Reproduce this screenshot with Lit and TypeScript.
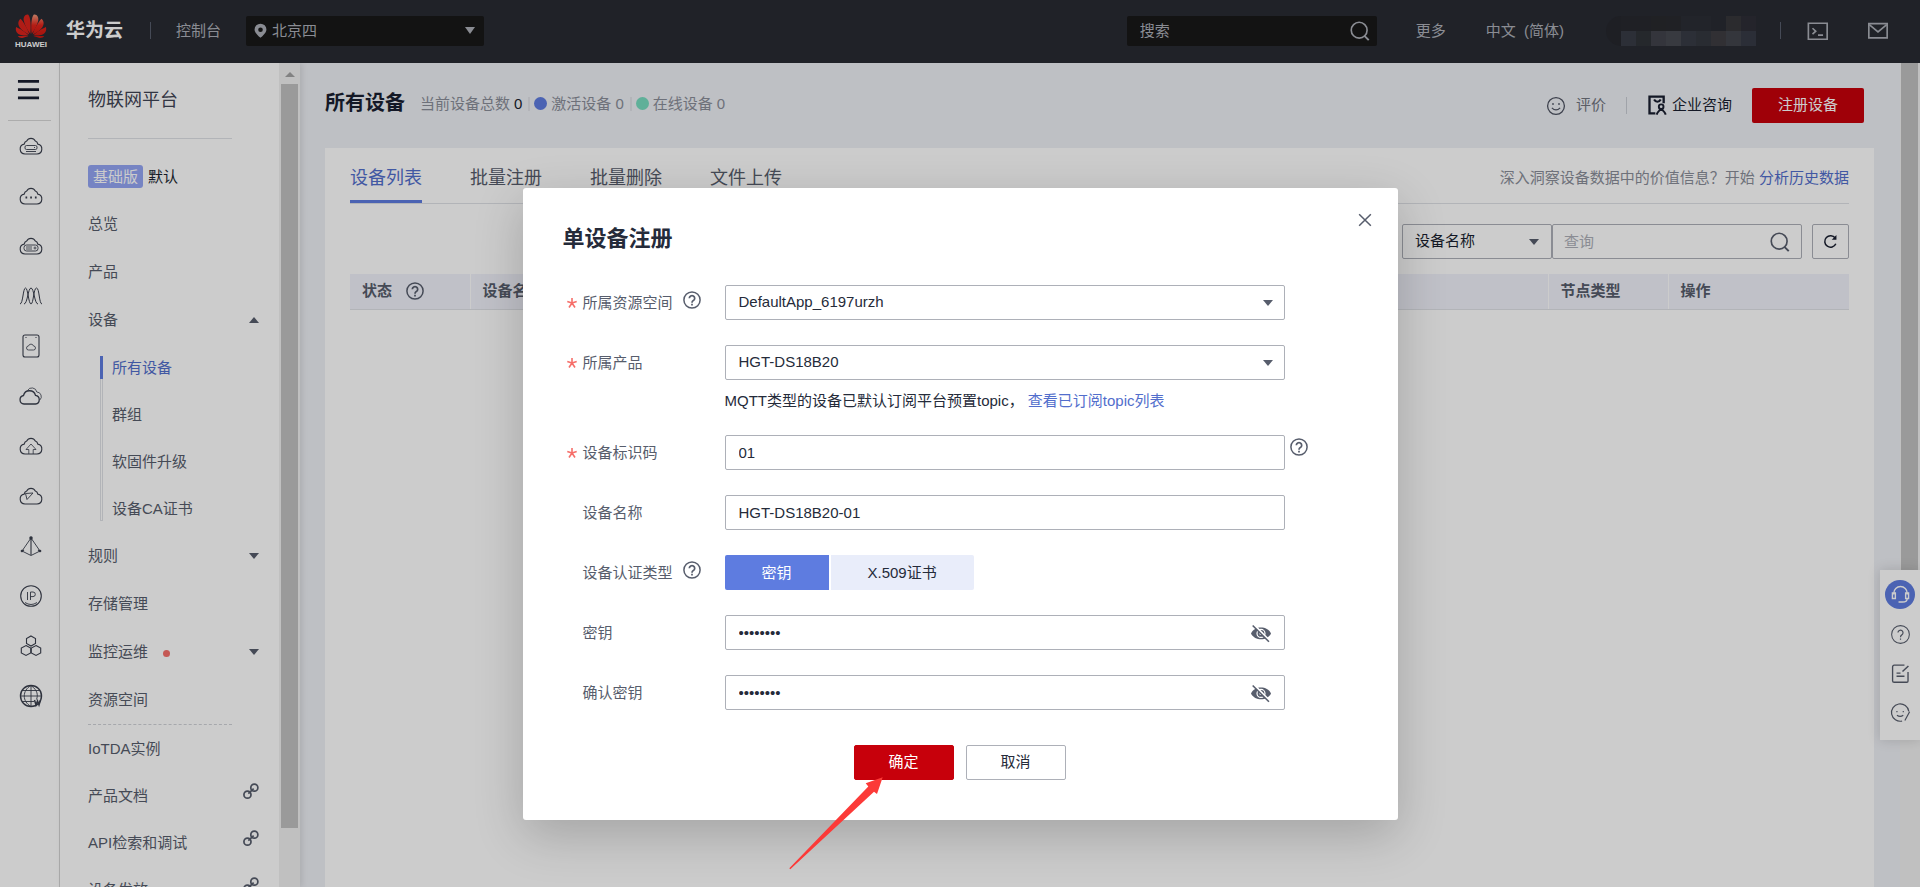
import { LitElement, html, css, svg, nothing, type TemplateResult } from "lit";
import { customElement, property } from "lit/decorators.js";
import { classMap } from "lit/directives/class-map.js";

const cloud = "M6 20a5 5 0 0 1-.8-9.900A3.800 3.800 0 0 1 7.700 7a4.800 4.800 0 0 1 8.600 0 3.800 3.800 0 0 1 2.500 3.100A5 5 0 0 1 18 20Z";

const glyphs: Record<string, TemplateResult> = {
  server: svg`<path d=${cloud}/><rect x="6" y="11.500" width="12" height="4" rx="1.500" stroke-width=".9"/><path d="M15 13.500h1M7 17.500h10" stroke-width=".9"/>`,
  dots: svg`<path d=${cloud}/><path d="M6.500 13.500h1.700M11.200 13.500h1.700M15.900 13.500h1.700" stroke-width="1.800"/>`,
  disk: svg`<path d=${cloud}/><rect x="5" y="11" width="14" height="6" rx="2.500" stroke-width=".9"/><path d="M7 13h6M7 15h6" stroke-width=".8"/><circle cx="16" cy="14" r="1" stroke-width=".8"/>`,
  wave: svg`<path d="M1 20C4 20 4 4 6.500 4S9.500 20 12 20 14.500 4 17.500 4 20 20 23 20M5 20C8.500 20 9 4 12 4s3.500 16 7 16" stroke-width="1"/>`,
  card: svg`<rect x="4" y="1" width="16" height="22" rx="2"/><path d="M6.500 3.500h1M16.500 3.500h1"/><path d="M9.500 16a2 2 0 0 1 0-4 2.600 2.600 0 0 1 5 0 2 2 0 0 1 0 4Z" stroke-width=".8"/>`,
  clouds: svg`<path d="M5 20a4.300 4.300 0 0 1-.5-8.500 6.200 6.200 0 0 1 12-.2A4.400 4.400 0 0 1 16.500 20Z" stroke-width="1.300"/><path d="M8.500 6.500a5 5 0 0 1 9.300 1.500 4.600 4.600 0 0 1 3 8" stroke-width=".8"/>`,
  upload: svg`<path d=${cloud}/><path d="M9.800 20v-4.500H7L12 10l5 5.500h-2.800V20" stroke-width=".8"/>`,
  send: svg`<path d=${cloud}/><path d="M6.500 9.500 14 9l-6 6.500Z" stroke-width=".9"/>`,
  pyramid: svg`<path d="M12 4 3 17l9 4.500L21 17Z" stroke-width=".9"/><path d="M12 4v17M3 17l2-1M21 17l-2-1"/><circle cx="12" cy="4" r="1.200" fill="currentColor"/><circle cx="3" cy="17" r=".8"/><circle cx="21" cy="17" r=".8"/>`,
  ip: svg`<circle cx="12" cy="12" r="10.300"/><path d="M8.500 8v8M11.500 16V8h2.500a2.300 2.300 0 0 1 0 4.600h-2.500M6 18.500q6 4 12 0" stroke-width=".9"/>`,
  hex: svg`<path d="m12 2 4.500 2.500v5L12 12 7.500 9.500v-5ZM7 11.500l4.700 2.500v5L7 21.500 2.300 19v-5ZM17 11.500l4.700 2.500v5L17 21.500 12.300 19v-5Z"/>`,
  globe: svg`<circle cx="12" cy="12" r="10.500" stroke-width="1.400"/><path d="M12 1.500v21M1.500 12h21M3 6.500h18M3 17.500h12M12 1.500c-9 5-9 16 0 21M12 1.500c7 5 7 10 5.500 14" stroke-width=".9"/><path d="m15.500 16 1.500 5 1.500-4 1.500 4 1.500-5" stroke-width="1.500"/>`,
  menu: svg`<path d="M.5 2.500h23M.5 11.500h23M.5 20.500h23" stroke-width="3"/>`,
  pin: svg`<path d="M12 1a9.500 9.500 0 0 0-9.500 9.500C2.500 17 12 23.500 12 23.500s9.500-6.500 9.500-13A9.500 9.500 0 0 0 12 1Zm0 6a3.700 3.700 0 1 1 0 7.400A3.700 3.700 0 0 1 12 7Z" fill="currentColor" stroke="none"/>`,
  search: svg`<circle cx="11" cy="11" r="9.500" stroke-width="2"/><path d="m17 17.500 5.500 5.500" stroke-width="2.400"/>`,
  terminal: svg`<path d="M1.500 3.500h20.500v17.500h-20.500Z" stroke-width="1.800"/><path d="m6 9 3.500 3.200-3.500 3.200M12 16.500h5.500" stroke-width="1.800"/>`,
  mail: svg`<path d="M2 4h20v15.500H2Z" stroke-width="1.800"/><path d="m2.500 5 9.500 8 9.500-8" stroke-width="1.800"/>`,
  smile: svg`<circle cx="12" cy="12" r="11.200" stroke-width="1.700"/><path d="M8 8v2.500M16 8v2.500M6.500 14.500q5.500 5.500 11 0" stroke-width="1.700"/>`,
  consult: svg`<path d="M10 22H3V2h17v8" stroke-width="2.800"/><path d="M8.500 5.500c2 3.500 6 3.500 8 0" stroke-width="2.600"/><circle cx="17" cy="14" r="2.800" stroke-width="2.300"/><path d="M11.500 23.500c1-3 2.500-4 4-5.500h3c1.500 1.500 3 2.500 4 5.500" stroke-width="2.400"/>`,
  help: svg`<circle cx="12" cy="12" r="10.800" stroke-width="2"/><path d="M8.400 9.600a3.600 3.600 0 1 1 5.400 3.200c-1.200.7-1.800 1.200-1.800 2.800M12 17v2.200" stroke-width="2.300"/>`,
  helpThin: svg`<circle cx="12" cy="12" r="11.200" stroke-width="1.300"/><path d="M8.800 9.600a3.200 3.200 0 1 1 4.800 2.900c-1.100.6-1.600 1.100-1.600 2.900M12 17v1.500" stroke-width="1.500"/>`,
  close: svg`<path d="m2 2 20 20m0-20-20 20" stroke-width="2.600"/>`,
  refresh: svg`<path d="M20.500 15.500a9.200 9.200 0 1 1-1-9" stroke-width="2.400"/><path d="M21.500 1.500V9H14Z" fill="currentColor" stroke="none"/>`,
  link: svg`<circle cx="17" cy="7" r="5.300" stroke-width="2.600"/><circle cx="6.700" cy="17.500" r="5.300" stroke-width="2.600"/><path d="m8 16 8-7.500" stroke-width="2.600"/>`,
  headset: svg`<path d="M3.500 12V10.500a8.500 8.500 0 0 1 17 0V12M3.500 10H1.800v7h3.700v-7ZM20.500 10h1.700v7h-3.700v-7ZM20.500 17c0 3-3 4.500-6 4.500M9.500 21.500h5" stroke-width="1.800"/>`,
  note: svg`<path d="M17 1.500H4a2 2 0 0 0-2 2V21a2 2 0 0 0 2 2h16a1.500 1.500 0 0 0 1.500-1.500V10M7 11.500h5M7 15.500h10" stroke-width="1.700"/><path d="m14.500 9.500 7.500-7" stroke-width="1.900"/>`,
  feedback: svg`<path d="M22.500 10.500A11 11 0 1 0 14 22.800M7.500 10v1.800M15.500 10v1.800M7.500 15.500q4 3 8 0M23.500 11l-6 11" stroke-width="1.500"/>`,
  eyeOff: svg`<path d="M0 12.500c4.500-9.500 19.500-9.500 24 0-4.500 9.500-19.500 9.500-24 0Z" fill="currentColor" stroke="none"/><circle cx="12" cy="12.500" r="4.800" stroke="#fff" stroke-width="1.400"/><circle cx="12" cy="12.500" r="2" fill="#fff" stroke="none"/><path d="M3.500 2 22.500 21.500" stroke="#fff" stroke-width="2.600"/><path d="M2 3l19.500 19.500" stroke-width="1.900"/>`,
};

@customElement("line-icon")
class LineIcon extends LitElement {
  @property() name = "";
  static styles = css`
    :host { display: inline-block; flex: none; width: 18px; height: 18px; }
    svg { display: block; width: 100%; height: 100%; overflow: visible; }
  `;
  render() {
    return html`<svg viewBox="0 0 24 24" fill="none" stroke="currentColor" stroke-width="1.1" aria-hidden="true">${glyphs[this.name] ?? nothing}</svg>`;
  }
}

const base = css`
  :host { box-sizing: border-box; }
  *, *::before, *::after { box-sizing: border-box; }
  button, input, select { font: inherit; color: inherit; margin: 0; border: 0; padding: 0; background: none; border-radius: 2px; outline: none; }
  button { cursor: pointer; }
  a { color: inherit; text-decoration: none; }
  .caret { width: 0; height: 0; border: 5px solid transparent; border-top: 6px solid #575d6c; border-bottom: 0; flex: none; }
  .caret.up { border-top: 0; border-bottom: 6px solid #575d6c; }
  .picker { display: grid; align-items: center; }
  .picker > * { grid-area: 1 / 1; }
  .picker select { appearance: none; width: 100%; height: 100%; }
  .picker .caret, .picker line-icon { pointer-events: none; }
  .picker .caret { justify-self: end; }
`;

@customElement("top-bar")
class TopBar extends LitElement {
  static styles = [base, css`
    :host { display: flex; align-items: center; height: 63px; padding: 0 31px 2px 15px; background: #282b33; color: #adb0b8; }
    .brand { display: flex; align-items: center; gap: 19px; }
    .logo { width: 32px; height: 34px; display: grid; grid-template-rows: 25px 9px; color: #fff; font-size: 8px; font-weight: 700; line-height: 12px; }
    .logo svg { display: block; width: 32px; height: 25px; }
    .name { color: #fff; font-size: 19px; font-weight: 700; line-height: 24px; }
    .rule { width: 1px; height: 17px; background: #575d6c; }
    .brand + .rule { margin: 0 25px 0 27px; }
    .region { width: 238px; height: 30px; margin-left: 25px; background: #181818; border-radius: 2px; padding: 0 9px 0 7px; }
    .region select { padding-left: 19px; }
    .region line-icon { width: 15px; height: 15px; color: #adb0b8; }
    .region .caret { border-top: 7px solid #adb0b8; }
    .search { display: flex; align-items: center; width: 250px; height: 30px; margin-left: auto; background: #181818; border-radius: 2px; padding: 0 7px 0 13px; }
    .search line-icon { width: 20px; height: 20px; }
    .search input { flex: 1; min-width: 0; }
    .search input::placeholder { color: #adb0b8; opacity: 1; }
    .more { margin-left: 39px; }
    .lang { margin-left: 40px; }
    .account { display: grid; grid-template-columns: repeat(9, 15px); grid-auto-rows: 15px; width: 150px; padding-left: 15px; margin-left: 42px; background: #26272e; border-radius: 15px 0 0 15px; overflow: hidden; }
    .account + .rule { margin: 0 26px 0 24px; }
    .tool { height: 22px; }
    .tool line-icon { width: 22px; height: 22px; }
    .tool + .tool { margin-left: 38px; }
  `];
  private mosaic = ["#27282f", "#27282f", "#292a2d", "#292a2f", "#2b2d35", "#2b2d35", "#282b33", "#36363a", "#2d2e36",
    "#373b45", "#2f3238", "#42434b", "#474950", "#383b45", "#34373f", "#3e3d42", "#42444b", "#363a45"];
  render() {
    const half = svg`<path d="M16.700 20.500C15.800 13 16.300 3 19 .5 22.500 0 24.200 3.500 23.500 7 22.500 12 19.500 17 16.700 20.500Z"/><path d="M17.800 21.200C19.500 15 24 8 26.800 5 29.500 7 29.800 10.500 28 13.500 26 17 22 19.500 17.800 21.200Z"/><path d="M18.600 22.200C22 18.500 28 15 31.500 13.500 32.500 17 31 20 28 21.300 25 22.600 21.500 22.600 18.600 22.200Z"/><path d="M18.800 23H29.800C28.500 25 26 25.200 24 24.700 22 24.200 20 23.600 18.800 23Z"/>`;
    return html`
      <a class="brand" href="#">
        <span class="logo"><svg viewBox="0 0 32 26" aria-hidden="true">
          <defs><linearGradient id="g" x1="0" y1="0" x2="0" y2="26" gradientUnits="userSpaceOnUse"><stop offset="0" stop-color="#f0a080"/><stop offset=".45" stop-color="#e2231a"/><stop offset="1" stop-color="#c8160f"/></linearGradient></defs>
          <g fill="url(#g)">${half}</g><g fill="#dc241c" transform="translate(32 0) scale(-1 1)">${half}</g></svg><span>HUAWEI</span></span>
        <span class="name">华为云</span>
      </a>
      <span class="rule"></span>
      <a href="#">控制台</a>
      <span class="picker region"><select aria-label="区域"><option>北京四</option></select><line-icon name="pin"></line-icon><i class="caret"></i></span>
      <label class="search"><input aria-label="搜索" placeholder="搜索" /><line-icon name="search"></line-icon></label>
      <a class="more" href="#">更多</a>
      <a class="lang" href="#">中文&nbsp; (简体)</a>
      <span class="account">${this.mosaic.map((c) => html`<i style="background:${c}"></i>`)}</span>
      <span class="rule"></span>
      <button class="tool" aria-label="命令行"><line-icon name="terminal"></line-icon></button>
      <button class="tool" aria-label="消息"><line-icon name="mail"></line-icon></button>`;
  }
}

@customElement("service-rail")
class ServiceRail extends LitElement {
  static styles = [base, css`
    :host { display: block; width: 60px; background: #fff; border-right: 1px solid #d8d8d8; color: #3a3f4d; }
    .toggle { display: grid; place-items: center start; width: 43px; height: 58px; margin-left: 8px; padding: 0 0 4px 9px; border-bottom: 1px solid #d8d8d8; border-radius: 0; color: #191f30; }
    .toggle line-icon { width: 23px; height: 22px; }
    .item { display: grid; place-items: center; height: 50px; padding-left: 3px; }
    .item line-icon { width: 24px; height: 24px; }
  `];
  private items = ["server", "dots", "disk", "wave", "card", "clouds", "upload", "send", "pyramid", "ip", "hex", "globe"];
  render() {
    return html`<button class="toggle" aria-label="服务列表"><line-icon name="menu"></line-icon></button>
      <nav>${this.items.map((n) => html`<a class="item" href="#" aria-label=${n}><line-icon name=${n}></line-icon></a>`)}</nav>`;
  }
}

@customElement("side-menu")
class SideMenu extends LitElement {
  static styles = [base, css`
    :host { display: flex; width: 240px; background: #fff; color: #575d6c; box-shadow: 2px 0 6px rgba(0, 0, 0, .1); z-index: 1; overflow: hidden; }
    .body { flex: 1; min-width: 0; padding: 0 20px 0 28px; }
    .title { margin: 0 27px 0 0; height: 76px; padding-bottom: 2px; border-bottom: 1px solid #dfe1e6; display: flex; align-items: center; font-size: 18px; font-weight: 400; color: #3f4454; }
    .edition { display: flex; align-items: center; gap: 5px; height: 61px; padding-top: 14px; color: #191f30; }
    .badge { background: #94a6f4; color: #fff; border-radius: 3px; padding: 0 5px; line-height: 23px; }
    .row { display: flex; align-items: center; width: 100%; height: 48px; white-space: nowrap; text-align: left; }
    .row .caret, .row line-icon { margin-left: auto; }
    .row line-icon { width: 16px; height: 16px; margin-bottom: 10px; }
    .dot { width: 7px; height: 7px; border-radius: 50%; background: #f66f6a; margin: 3px 0 0 15px; }
    .sub { display: grid; grid-template-columns: 3px 1fr; column-gap: 9px; margin-left: 12px; }
    .track { border: 1px solid #dfe1e6; margin: 12px 0 11px; grid-row: 1 / 5; grid-column: 1; }
    .mark { grid-row: 1; grid-column: 1; background: #5e7ce0; margin: 12px 0; }
    .sub .row { height: 47px; grid-column: 2; }
    .current { color: #526ecc; }
    .extra { border-top: 1px dashed #d0d2d8; margin: 0 27px 0 0; }
    .links .row { height: 47px; }
    .scroll { width: 21px; background: #f1f1f1; padding: 9px 2px 0; display: flex; flex-direction: column; align-items: center; gap: 7px; }
    .scroll .caret { border-bottom: 5px solid #a3a3a3; }
    .thumb { width: 17px; height: 92%; max-height: 744px; background: #c1c1c1; }
  `];
  render() {
    const row = (t: string) => html`<a class="row" href="#">${t}</a>`;
    const out = (t: string) => html`<a class="row" href="#">${t}<line-icon name="link"></line-icon></a>`;
    return html`<nav class="body">
        <h2 class="title">物联网平台</h2>
        <div class="edition"><span class="badge">基础版</span>默认</div>
        ${row("总览")}${row("产品")}
        <button class="row" aria-expanded="true">设备<i class="caret up"></i></button>
        <div class="sub"><i class="track"></i><i class="mark"></i>
          <a class="row current" href="#">所有设备</a>${row("群组")}${row("软固件升级")}${row("设备CA证书")}</div>
        <button class="row">规则<i class="caret"></i></button>
        ${row("存储管理")}
        <button class="row">监控运维<i class="dot"></i><i class="caret"></i></button>
        ${row("资源空间")}
        <div class="extra"></div>
        <div class="links">${row("IoTDA实例")}${out("产品文档")}${out("API检索和调试")}${out("设备发放")}</div>
      </nav>
      <div class="scroll"><i class="caret up"></i><i class="thumb"></i></div>`;
  }
}

@customElement("device-page")
class DevicePage extends LitElement {
  static styles = [base, css`
    :host { display: flex; background: #eef0f5; min-width: 0; color: #575d6c; }
    .body { flex: 1; min-width: 0; display: flex; flex-direction: column; padding: 0 26px 0 25px; }
    .head { display: flex; align-items: center; height: 85px; }
    h1 { margin: 0 15px 0 0; padding-bottom: 6px; font-size: 20px; line-height: 28px; color: #191f30; }
    .stats { display: flex; align-items: center; color: #8a8e99; padding-bottom: 4px; }
    .stats b { font-weight: 400; margin-left: 4px; }
    .stats .total { color: #191f30; }
    .stats .bar { width: 2px; height: 14px; background: #e0e2e8; margin: 0 4px 0 6px; }
    .stats .bulb { width: 13px; height: 13px; border-radius: 50%; background: #5e7ce0; margin-right: 4px; }
    .stats .bulb.online { background: #77dcc0; }
    .actions { display: flex; align-items: center; margin-left: auto; }
    .rate { display: flex; align-items: center; gap: 11px; color: #71757f; padding-bottom: 2px; }
    .rate line-icon { color: #4c5160; margin-top: 2px; }
    .actions .rule { width: 1px; height: 17px; background: #c9ccd4; margin: 0 20px 0 20px; }
    .consult { display: flex; align-items: center; gap: 5px; color: #191f30; padding-bottom: 2px; }
    .consult line-icon { width: 20px; height: 20px; }
    .primary { height: 35px; padding: 0 26px 2px; margin: 0 10px 0 20px; background: #c7000b; color: #fff; }
    .card { flex: 1; background: #fff; padding: 0 25px; }
    .tabs { display: flex; height: 56px; gap: 48px; border-bottom: 1px solid #dfe1e6; }
    .tab { height: 55px; padding-top: 8px; border-bottom: 3px solid transparent; border-radius: 0; font-size: 18px; color: #575d6c; }
    .tab.on { color: #526ecc; border-color: #5e7ce0; }
    .tip { margin: 0 0 0 auto; padding-top: 6px; line-height: 48px; color: #8a8e99; }
    .tip a { color: #526ecc; }
    .filters { display: flex; justify-content: flex-end; height: 35px; margin: 20px 0 15px; color: #191f30; }
    .filters > * { border: 1px solid #adb0b8; border-radius: 2px; }
    .kind { width: 150px; padding-right: 12px; }
    .kind select { padding: 0 0 2px 12px; }
    .query { display: flex; align-items: center; width: 250px; padding: 0 11px; color: #575d6c; }
    .query line-icon { width: 20px; height: 20px; }
    .query input { flex: 1; min-width: 0; }
    .query input::placeholder { color: #adb0b8; opacity: 1; }
    .reload { width: 37px; margin-left: 10px; display: grid; place-items: center; }
    .reload line-icon { width: 15px; height: 15px; }
    table { width: 100%; border-collapse: collapse; table-layout: fixed; background: #f0f2fa; }
    th { height: 35px; padding: 0 12px; border-bottom: 1px solid #dfe1e6; text-align: left; font-weight: 700; line-height: 20px; }
    th + th { border-left: 1px solid #fff; }
    .narrow { width: 120px; }
    .ops { width: 181px; }
    .cell { display: flex; align-items: center; gap: 14px; }
    .scroll { width: 20px; background: #f1f1f1; padding: 0 2px 0 1px; }
    .thumb { display: block; width: 17px; height: 62%; background: #c1c1c1; }
  `];
  render() {
    return html`<main class="body">
        <header class="head">
          <h1>所有设备</h1>
          <div class="stats">当前设备总数<b class="total">0</b><i class="bar"></i><i class="bulb"></i>激活设备<b>0</b><i class="bar"></i><i class="bulb online"></i>在线设备<b>0</b></div>
          <div class="actions">
            <a class="rate" href="#"><line-icon name="smile"></line-icon>评价</a><i class="rule"></i>
            <a class="consult" href="#"><line-icon name="consult"></line-icon>企业咨询</a>
            <button class="primary">注册设备</button>
          </div>
        </header>
        <section class="card">
          <div class="tabs">
            ${["设备列表", "批量注册", "批量删除", "文件上传"].map((t, i) => html`<button class=${classMap({ tab: true, on: i === 0 })}>${t}</button>`)}
            <p class="tip">深入洞察设备数据中的价值信息？开始 <a href="#">分析历史数据</a></p>
          </div>
          <div class="filters">
            <span class="picker kind"><select aria-label="查询条件"><option>设备名称</option></select><i class="caret"></i></span>
            <label class="query"><input aria-label="查询" placeholder="查询" /><line-icon name="search"></line-icon></label>
            <button class="reload" aria-label="刷新"><line-icon name="refresh"></line-icon></button>
          </div>
          <table><thead><tr>
            <th class="narrow"><span class="cell">状态<line-icon name="help"></line-icon></span></th>
            <th>设备名称</th><th class="narrow">节点类型</th><th class="ops">操作</th>
          </tr></thead></table>
        </section>
      </main>
      <div class="scroll"><i class="thumb"></i></div>`;
  }
}

@customElement("register-dialog")
class RegisterDialog extends LitElement {
  static styles = [base, css`
    :host { display: block; position: relative; width: 875px; background: #fff; border-radius: 3px; color: #252b3a; box-shadow: 0 15px 50px rgba(0, 0, 0, .2); padding: 34px 26px 40px 40px; }
    .top { display: flex; justify-content: space-between; align-items: flex-start; height: 63px; }
    h2 { margin: 0; font-size: 22px; line-height: 34px; }
    .close { display: grid; place-items: center; width: 14px; height: 14px; margin-top: -9px; color: #575d6c; }
    .close line-icon { width: 14px; height: 14px; }
    form { display: grid; grid-template-columns: 162px 560px 18px; row-gap: 25px; }
    .label { grid-column: 1; display: flex; align-items: center; height: 35px; padding-left: 20px; color: #575d6c; }
    .label.required { padding-left: 4px; }
    .star { width: 10px; height: 10px; margin: 1px 6px 0 0; flex: none; stroke: #f66f6a; stroke-width: 1.6; }
    .label line-icon { margin: 0 0 6px 10px; color: #575d6c; }
    .field { grid-column: 2; height: 35px; border: 1px solid #adb0b8; border-radius: 2px; padding: 0 11px 0 0; }
    .field select { padding: 0 0 2px 13px; }
    .field input { padding-left: 13px; }
    .secret { display: flex; align-items: center; padding-right: 13px; }
    .secret input { flex: 1; min-width: 0; height: 100%; }
    .secret button { height: 20px; color: #575d6c; }
    .secret line-icon { width: 20px; height: 20px; }
    input.field { width: 100%; padding: 0 13px; }
    .note { grid-column: 2; margin: -15px 0 -2px; line-height: 22px; height: 22px; }
    .note a { color: #526ecc; }
    .aside { grid-column: 3; margin: 3px 0 0 5px; color: #575d6c; }
    .modes { grid-column: 2; display: flex; gap: 2px; }
    .mode { height: 35px; padding: 0 37px; background: #e9edfa; border-radius: 0 2px 2px 0; }
    .mode.on { background: #5e7ce0; color: #fff; border-radius: 2px 0 0 2px; }
    .buttons { display: flex; justify-content: center; gap: 12px; margin-top: 35px; padding-right: 15px; }
    .buttons button { width: 100px; height: 35px; padding-bottom: 2px; border: 1px solid #adb0b8; }
    .buttons .ok { background: #c7000b; border-color: #c7000b; color: #fff; }
    .pointer { position: absolute; left: 265px; top: 588px; width: 96px; height: 94px; fill: #fc3a38; pointer-events: none; }
  `];
  private label(id: string, text: string, required = false, help = false) {
    return html`<label class=${classMap({ label: true, required })} for=${id}>
      ${required ? html`<svg class="star" viewBox="0 0 10 10" aria-hidden="true"><path d="M5 0v5M5 5 .3 3.500M5 5l4.700-1.500M5 5 2 9.500M5 5l3 4.500"/></svg>` : nothing}${text}${help ? html`<line-icon name="help"></line-icon>` : nothing}</label>`;
  }
  private secret(id: string) {
    return html`<div class="field secret"><input id=${id} type="password" value="12345678" autocomplete="off" /><button type="button" aria-label="显示"><line-icon name="eyeOff"></line-icon></button></div>`;
  }
  render() {
    return html`
      <div class="top"><h2>单设备注册</h2><button class="close" aria-label="关闭"><line-icon name="close"></line-icon></button></div>
      <form>
        ${this.label("space", "所属资源空间", true, true)}
        <div class="field picker"><select id="space"><option>DefaultApp_6197urzh</option></select><i class="caret"></i></div>
        ${this.label("product", "所属产品", true)}
        <div class="field picker"><select id="product"><option>HGT-DS18B20</option></select><i class="caret"></i></div>
        <p class="note">MQTT类型的设备已默认订阅平台预置topic， <a href="#">查看已订阅topic列表</a></p>
        ${this.label("code", "设备标识码", true)}
        <input class="field" id="code" value="01" /><line-icon class="aside" name="help"></line-icon>
        ${this.label("name", "设备名称")}
        <input class="field" id="name" value="HGT-DS18B20-01" />
        ${this.label("mode", "设备认证类型", false, true)}
        <div class="modes"><button type="button" id="mode" class="mode on">密钥</button><button type="button" class="mode">X.509证书</button></div>
        ${this.label("secret", "密钥")}${this.secret("secret")}
        ${this.label("confirm", "确认密钥")}${this.secret("confirm")}
      </form>
      <div class="buttons"><button class="ok">确定</button><button>取消</button></div>
      <svg class="pointer" viewBox="0 0 96 94" aria-hidden="true"><path d="M94.700 1.300 77.700 7.300l2.600 3.200L1.300 92.300l1 1L86 15.700l3 2.300Z"/></svg>`;
  }
}

@customElement("app-root")
class AppRoot extends LitElement {
  static styles = [base, css`
    :host { display: grid; grid-template-rows: auto minmax(0, 1fr); height: 100vh; overflow: hidden; position: relative; font: 15px/22px "Liberation Sans", "Noto Sans CJK SC", sans-serif; }
    .work { display: grid; grid-template-columns: auto auto minmax(0, 1fr); min-height: 0; overflow: hidden; }
    .float { position: absolute; right: 0; top: 570px; width: 40px; height: 170px; padding: 10px 0 18px; display: flex; flex-direction: column; gap: 20px; align-items: center; background: #fff; color: #575d6c; box-shadow: 0 0 12px rgba(0, 0, 0, .15); z-index: 2; }
    .float button { display: grid; place-items: center; }
    .float line-icon { width: 19px; height: 19px; }
    .float .agent { width: 30px; height: 30px; margin-bottom: -4px; border-radius: 50%; background: #5e7ce0; color: #fff; }
    .mask { position: absolute; inset: 0; display: flex; justify-content: center; align-items: flex-start; padding-top: 188px; background: rgba(0, 0, 0, .2); z-index: 3; }
  `];
  render() {
    return html`<top-bar></top-bar>
      <div class="work"><service-rail></service-rail><side-menu></side-menu><device-page></device-page></div>
      <aside class="float">
        <button class="agent" aria-label="智能客服"><line-icon name="headset"></line-icon></button>
        <button aria-label="帮助"><line-icon name="helpThin"></line-icon></button>
        <button aria-label="工单"><line-icon name="note"></line-icon></button>
        <button aria-label="反馈"><line-icon name="feedback"></line-icon></button>
      </aside>
      <div class="mask"><register-dialog role="dialog" aria-modal="true"></register-dialog></div>`;
  }
}
